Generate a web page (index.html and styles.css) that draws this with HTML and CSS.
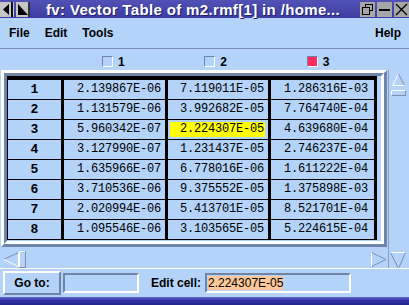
FILE: index.html
```html
<!DOCTYPE html>
<html lang="en">

<head>
    <meta charset="UTF-8">
    <title>fv: Vector Table</title>
    <link rel="stylesheet" href="styles.css">
</head>

<body>
    <div class="titlebar">
        <svg class="lbtns" width="31" height="17" viewBox="0 0 31 17">
            <rect x="0" y="1" width="14" height="15" fill="#c6c6c6"/>
            <polygon points="3,8.5 9,3 9,14" fill="#000"/>
            <rect x="11" y="1" width="2" height="15" fill="#111"/>
            <rect x="16" y="1" width="14" height="15" fill="#c6c6c6"/>
            <polygon points="18,3 28,14 18,14" fill="#000"/>
            <rect x="28" y="1" width="2" height="15" fill="#333"/>
        </svg>
        <span class="title">fv: Vector Table of m2.rmf[1] in /home...</span>
        <svg class="rbtns" width="49" height="17" viewBox="0 0 49 17">
            <rect x="0" y="1" width="15" height="15" fill="#a6a6a6"/>
            <rect x="5.5" y="3.5" width="7" height="6" fill="none" stroke="#000"/>
            <rect x="2.5" y="6.5" width="7" height="7" fill="#a6a6a6" stroke="#000"/>
            <rect x="17" y="1" width="15" height="15" fill="#a6a6a6"/>
            <rect x="19" y="8" width="11" height="2" fill="#000"/>
            <rect x="34" y="1" width="15" height="15" fill="#a6a6a6"/>
            <path d="M36 3 L47 14 M47 3 L36 14" stroke="#000" stroke-width="1.3" fill="none"/>
        </svg>
    </div>

    <div class="menubar">
        <span>File</span>
        <span>Edit</span>
        <span>Tools</span>
        <span class="help">Help</span>
    </div>

    <div class="opts">
        <div class="opt"><span class="box"></span>1</div>
        <div class="opt"><span class="box"></span>2</div>
        <div class="opt"><span class="box on"></span>3</div>
    </div>

    <div class="main">
        <div class="left">
            <div class="tablebox">
                <div class="frame">
                    <div class="grid" id="grid"></div>
                </div>
            </div>
            <div class="hscroll">
                <svg width="26" height="17" viewBox="0 0 26 17" fill="none">
                    <path d="M3.5 8.5 L18.5 1.5" stroke="#7a8fb4"/>
                    <path d="M3.5 8.5 L18.5 15.5" stroke="#fff"/>
                    <path d="M18.5 1.5 V15.5" stroke="#fff"/>
                    <rect x="19.5" y="0.5" width="6" height="16" stroke="#7a8fb4"/>
                    <path d="M19.5 16 V0.5 H25" stroke="#fff"/>
                </svg>
                <svg width="16" height="17" viewBox="0 0 16 17" fill="none">
                    <path d="M0.5 1.5 L15 8.5" stroke="#7a8fb4"/>
                    <path d="M0.5 15.5 L15 8.5" stroke="#7a8fb4"/>
                    <path d="M0.5 1.5 V15.5" stroke="#fff"/>
                </svg>
            </div>
        </div>
        <div class="vscroll">
            <svg width="20" height="27" viewBox="0 0 20 27" fill="none">
                <path d="M9.5 4 L3.5 15.5" stroke="#fff"/>
                <path d="M9.5 4 L15.5 15.5" stroke="#7a8fb4"/>
                <path d="M3.5 15.5 H15.5" stroke="#fff"/>
                <rect x="2.5" y="20.5" width="14" height="5" stroke="#7a8fb4"/>
                <path d="M2.5 25.5 V20.5 H16.5" stroke="#fff"/>
            </svg>
            <svg width="20" height="16" viewBox="0 0 20 16" fill="none">
                <path d="M1.5 0.5 H16.5" stroke="#fff"/>
                <path d="M1.5 0.5 L9 15.5" stroke="#7a8fb4"/>
                <path d="M16.5 0.5 L10 15.5" stroke="#7a8fb4"/>
            </svg>
        </div>
    </div>

    <div class="bottom">
        <div class="gobtn">Go to:</div>
        <div class="entry goentry"></div>
        <span class="lbl">Edit cell:</span>
        <div class="entry editentry"><span class="sel">2.224307E-05</span></div>
    </div>
    <div class="winbottom"></div>

    <script>
        const rows = [
            ['2.139867E-06', '7.119011E-05', '1.286316E-03'],
            ['1.131579E-06', '3.992682E-05', '7.764740E-04'],
            ['5.960342E-07', '2.224307E-05', '4.639680E-04'],
            ['3.127990E-07', '1.231437E-05', '2.746237E-04'],
            ['1.635966E-07', '6.778016E-06', '1.611222E-04'],
            ['3.710536E-06', '9.375552E-05', '1.375898E-03'],
            ['2.020994E-06', '5.413701E-05', '8.521701E-04'],
            ['1.095546E-06', '3.103565E-05', '5.224615E-04']
        ];

        const grid = document.getElementById('grid');
        rows.forEach(function (row, i) {
            const head = document.createElement('div');
            head.className = 'cell head';
            head.textContent = i + 1;
            grid.appendChild(head);

            row.forEach(function (val, j) {
                const cell = document.createElement('div');
                cell.className = 'cell c' + (j + 2);
                const v = document.createElement('span');
                v.className = 'v';
                if (i === 2 && j === 1) v.className += ' hilite';
                v.textContent = val;
                cell.appendChild(v);
                grid.appendChild(cell);
            });
        });
    </script>
</body>

</html>
```

FILE: styles.css
```css
body {
    margin: 0;
    width: 409px;
    height: 305px;
    overflow: hidden;
    background: #b3d3f9;
    font-family: "Liberation Sans", Arial, sans-serif;
    color: #000;
}

.titlebar {
    height: 18px;
    background: linear-gradient(#5252b6, #3c3ca2);
    display: flex;
    align-items: center;
}

.lbtns {
    flex: none;
}

.title {
    flex: 1;
    margin-left: 15px;
    color: #fff;
    font-weight: bold;
    font-size: 15px;
    letter-spacing: 0.35px;
    white-space: nowrap;
    text-shadow: 1px 1px 0 #22226a;
}

.rbtns {
    flex: none;
}

.menubar {
    height: 30px;
    display: flex;
    align-items: center;
    gap: 15px;
    padding: 0 8px 0 9px;
    border-bottom: 1px solid #7a8cb0;
    font-size: 12px;
    font-weight: bold;
}

.help {
    margin-left: auto;
}

.opts {
    height: 21px;
    box-sizing: border-box;
    padding: 4px 0 0 102px;
    display: flex;
    align-items: center;
}

.opt {
    width: 103px;
    display: flex;
    align-items: center;
    gap: 5px;
    font-size: 12px;
    font-weight: bold;
}

.box {
    width: 11px;
    height: 11px;
    box-sizing: border-box;
    border: 1px solid;
    border-color: #7084a8 #fff #fff #7084a8;
}

.box.on {
    background: #ff2a60;
}

.main {
    display: flex;
    height: 198px;
}

.left {
    width: 388px;
}

.tablebox {
    margin-left: 1px;
    width: 386px;
    box-sizing: border-box;
    border: 3px solid;
    border-color: #fff #7084a8 #7084a8 #fff;
}

.frame {
    border: 3px solid;
    border-color: #7084a8 #fff #fff #7084a8;
    padding: 0 4px 1px 0;
}

.grid {
    display: grid;
    grid-template-columns: 56px 104px 103px 106px;
    grid-auto-rows: 20px;
    border-left: 1px solid #000;
    border-top: 4px solid #000;
    width: max-content;
}

.cell {
    box-sizing: border-box;
    border-right: 3px solid #000;
    border-bottom: 1px solid #000;
    display: flex;
    justify-content: flex-end;
    align-items: center;
    font-family: "Liberation Mono", "Courier New", monospace;
    font-size: 12px;
    letter-spacing: -0.2px;
}

.cell.head {
    justify-content: center;
    font-weight: bold;
    font-size: 13px;
    letter-spacing: 0;
}

.v {
    margin-right: 2px;
    padding: 0 2px 0 2px;
    line-height: 15px;
}

.c3 .v {
    margin-right: 3px;
    padding-right: 1px;
}

.c4 .v {
    padding-right: 4px;
}

.v.hilite {
    background: #ffff00;
    width: 95px;
    text-align: right;
    box-sizing: border-box;
}

.hscroll {
    margin-top: 3px;
    height: 18px;
    display: flex;
    justify-content: space-between;
    align-items: center;
    padding: 0 1px 0 0;
}

.vscroll {
    width: 21px;
    box-sizing: border-box;
    border-left: 1px solid #8a9cc0;
    display: flex;
    flex-direction: column;
    justify-content: space-between;
}

.bottom {
    height: 29px;
    box-sizing: border-box;
    border-top: 1px solid #fff;
    display: flex;
    align-items: center;
    font-size: 12px;
}

.gobtn {
    margin-left: 3px;
    width: 58px;
    height: 24px;
    box-sizing: border-box;
    border: 2px solid;
    border-color: #fff #7084a8 #7084a8 #fff;
    display: flex;
    justify-content: center;
    align-items: center;
    font-weight: bold;
}

.entry {
    height: 20px;
    box-sizing: border-box;
    border: 2px solid;
    border-color: #7084a8 #fff #fff #7084a8;
    display: flex;
    align-items: center;
}

.goentry {
    margin-left: 2px;
    width: 76px;
}

.lbl {
    margin-left: 12px;
    font-weight: bold;
}

.editentry {
    margin-left: 4px;
    width: 146px;
    padding-left: 1px;
}

.sel {
    background: #fdc89a;
    line-height: 14px;
}

.winbottom {
    height: 8px;
    background: linear-gradient(#6868d0, #3434a4 40%, #24248a);
}
```
